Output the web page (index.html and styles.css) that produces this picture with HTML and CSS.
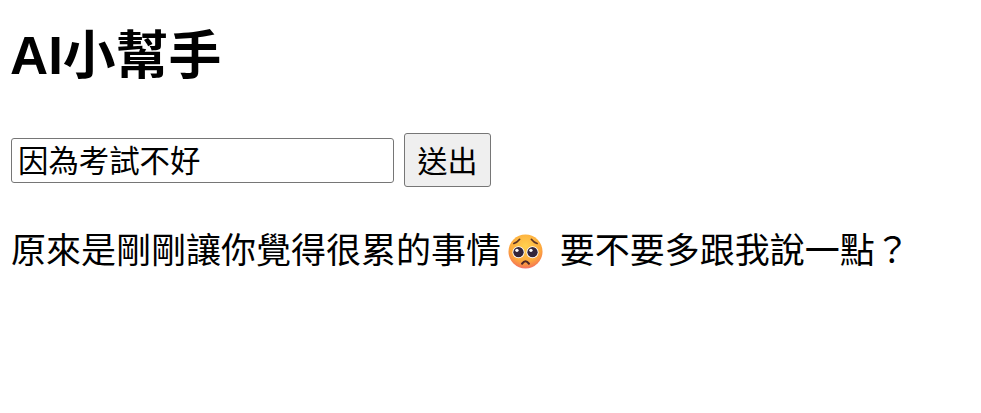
FILE: index.html
```html
<!DOCTYPE html>
<html lang="zh-Hant">
  <head>
    <meta charset="UTF-8" />
    <meta name="viewport" content="width=device-width, initial-scale=1.0" />
    <title>AI小幫手</title>
    <link rel="stylesheet" href="styles.css">
  </head>

  <body>
    <h1>AI小幫手</h1>

    <div class="chat-form">
      <input type="text" id="message" class="chat-input" value="因為考試不好" />
      <button class="send-btn">送出</button>
    </div>

    <p class="reply">原來是剛剛讓你覺得很累的事情<svg class="emoji" viewBox="0 0 36 36" role="img" aria-label="pleading face">
        <defs>
          <radialGradient id="face" cx="50%" cy="34%" r="70%">
            <stop offset="0%" stop-color="#ffd14f" />
            <stop offset="65%" stop-color="#fdaa3c" />
            <stop offset="88%" stop-color="#f67f50" />
            <stop offset="100%" stop-color="#ef5f92" />
          </radialGradient>
        </defs>
        <circle cx="18" cy="18" r="17.5" fill="url(#face)" />
        <circle cx="10.8" cy="18.7" r="6.2" fill="#fff" />
        <circle cx="25.2" cy="18.7" r="6.2" fill="#fff" />
        <circle cx="10.8" cy="18.7" r="5.3" fill="#33263a" />
        <circle cx="25.2" cy="18.7" r="5.3" fill="#33263a" />
        <circle cx="9.2" cy="16.8" r="1.7" fill="#fff" />
        <circle cx="23.6" cy="16.8" r="1.7" fill="#fff" />
        <path d="M6 9.8 Q9.5 8.8 12 5.5 M30 9.8 Q26.5 8.8 24 5.5" fill="none" stroke="#5e3526" stroke-width="1.7" stroke-linecap="round" />
        <path d="M14.5 30.5 Q18 25.5 21.5 30.5" fill="none" stroke="#4f2626" stroke-width="2.2" stroke-linecap="round" />
      </svg> 要不要多跟我說一點？</p>
  </body>
</html>
```

FILE: styles.css
```css
body {
  margin: 8px 11px;
  font-family: "Liberation Sans", "Noto Sans CJK TC", sans-serif;
  color: #000;
  background-color: #fff;
}

h1 {
  margin: 18px 0 48px -1px;
  font-size: 52.8px;
  line-height: 59px;
  font-weight: bold;
}

.chat-form {
  display: flex;
  align-items: center;
  gap: 10px;
}

.chat-input {
  width: 383px;
  height: 45px;
  padding: 0 6px 3px;
  box-sizing: border-box;
  font-family: inherit;
  font-size: 30.4px;
  border: 1px solid #767676;
  border-radius: 3px;
}

.send-btn {
  width: 87px;
  height: 54px;
  padding: 0 6px 2px;
  font-family: inherit;
  font-size: 30px;
  background-color: #efefef;
  border: 1px solid #767676;
  border-radius: 3px;
}

.reply {
  margin: 44px 0 0;
  font-size: 35px;
  line-height: 40px;
}

.emoji {
  width: 35px;
  height: 35px;
  margin: 0 7px;
  vertical-align: -6px;
}
```
